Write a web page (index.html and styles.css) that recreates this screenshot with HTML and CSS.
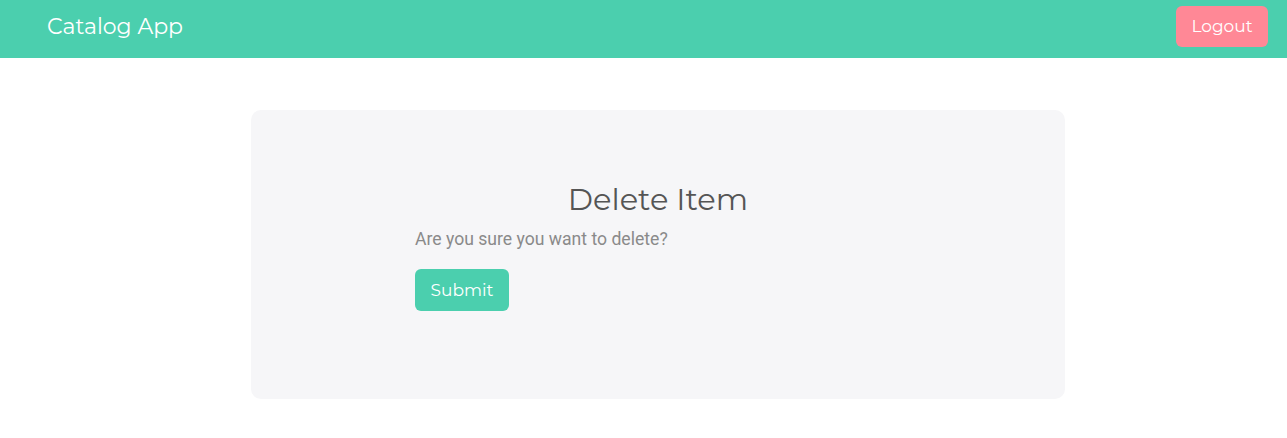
FILE: index.html
```html
<!DOCTYPE html>
<html>
<head>
<meta charset="utf-8">
<link rel="stylesheet" href="styles.css">
</head>
<body>
<header class="navbar">
  <span class="brand">Catalog App</span>
  <button class="btn btn-logout">Logout</button>
</header>
<main class="page">
  <section class="card">
    <div class="form">
      <h1 class="title">Delete Item</h1>
      <p class="question">Are you sure you want to delete?</p>
      <button class="btn btn-submit">Submit</button>
    </div>
  </section>
</main>
</body>
</html>
```
FILE: styles.css
```css
* { box-sizing: border-box; }
body {
  margin: 0;
  background: #ffffff;
  font-family: "Montserrat", "DejaVu Sans", sans-serif;
}
.navbar {
  height: 58px;
  background: #4bcfae;
  display: flex;
  align-items: center;
  justify-content: space-between;
  padding: 0 19px 0 47px;
}
.brand {
  color: #ffffff;
  font-size: 22px;
  font-weight: 400;
  margin-top: -6px;
}
.btn {
  border: none;
  color: #ffffff;
  font-family: "Montserrat", "DejaVu Sans", sans-serif;
  font-size: 17px;
  border-radius: 6px;
  cursor: pointer;
  padding: 0;
}
.btn-logout {
  background: #ff8896;
  width: 92px;
  height: 41px;
  margin-top: -6px;
}
.page {
  display: flex;
  justify-content: center;
  padding-top: 52px;
  padding-left: 29px;
}
.card {
  width: 814px;
  height: 289px;
  background: #f6f6f8;
  border-radius: 10px;
  display: flex;
  justify-content: center;
  padding-top: 69px;
}
.form {
  width: 486px;
}
.title {
  margin: 0;
  text-align: center;
  font-size: 30.5px;
  font-weight: 400;
  color: #555555;
  line-height: 40px;
}
.question {
  margin: 9px 0 19px;
  font-family: "Roboto", sans-serif;
  font-size: 17.6px;
  color: #8a8a8a;
  line-height: 22px;
}
.btn-submit {
  background: #4bcfae;
  width: 94px;
  height: 42px;
}
```
